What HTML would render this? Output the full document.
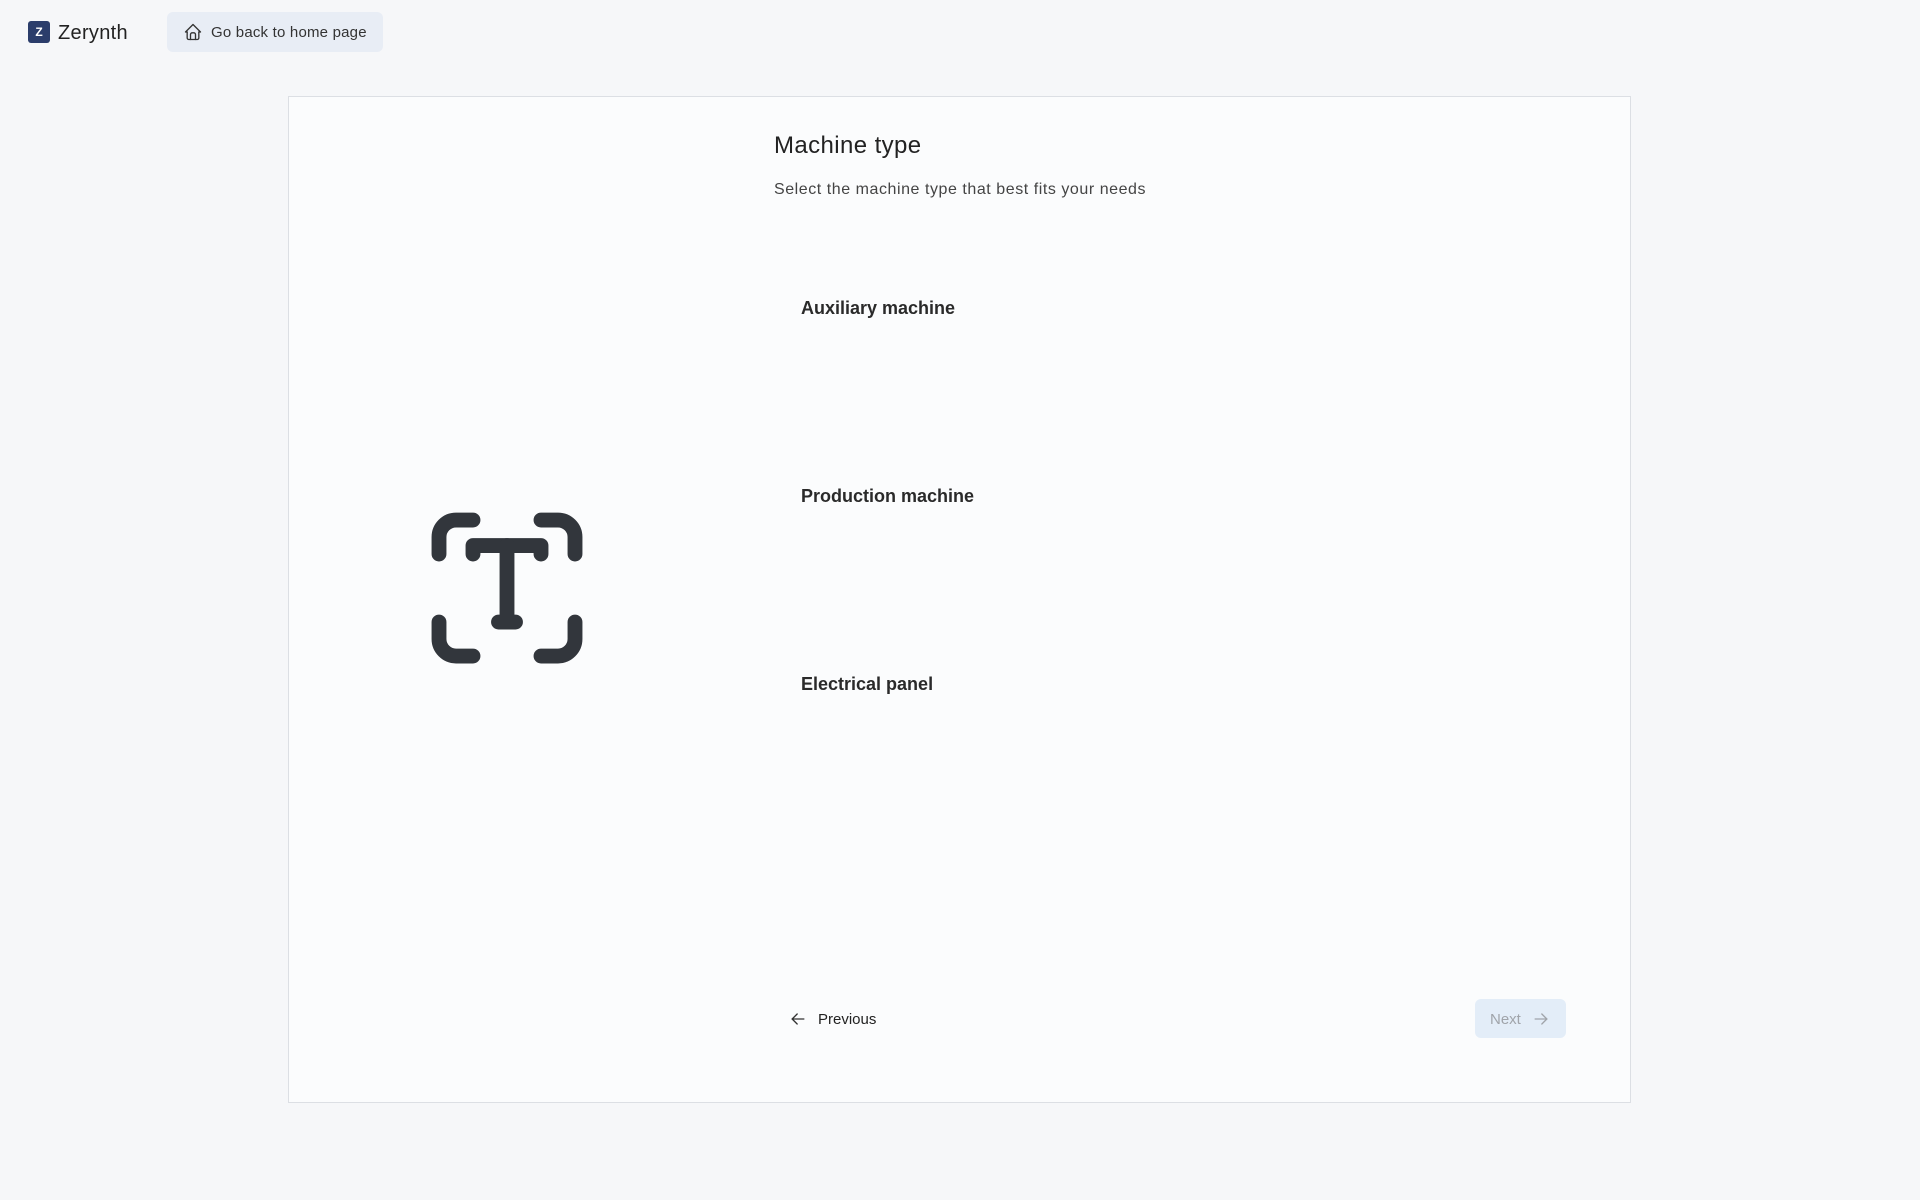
<!DOCTYPE html>
<html><head><meta charset="utf-8"><style>
*{margin:0;padding:0;box-sizing:border-box}
body{width:1920px;height:1200px;background:#f6f7f9;font-family:"Liberation Sans",sans-serif;color:#222;position:relative;overflow:hidden}
.abs{position:absolute}
</style></head><body>
<div class="abs" style="left:28px;top:21px;width:22px;height:22px;background:#2b3d6b;border-radius:3px;color:#fff;font-size:12px;font-weight:bold;line-height:22px;text-align:center">Z</div>
<div class="abs" style="left:58px;top:20px;font-size:20px;line-height:26px;color:#222;letter-spacing:0.3px">Zerynth</div>
<div class="abs" style="left:167px;top:12px;width:216px;height:40px;background:#e8edf5;border-radius:6px"></div>
<svg class="abs" style="left:183px;top:22px" width="20" height="20" viewBox="0 0 24 24" fill="none" stroke="#333" stroke-width="1.6" stroke-linecap="round" stroke-linejoin="round"><path d="M5 12l-2 0l9 -9l9 9l-2 0"/><path d="M5 12v7a2 2 0 0 0 2 2h10a2 2 0 0 0 2 -2v-7"/><path d="M9 21v-6a2 2 0 0 1 2 -2h2a2 2 0 0 1 2 2v6"/></svg>
<div class="abs" style="left:211px;top:24px;font-size:15px;line-height:18px;color:#333;letter-spacing:0.2px">Go back to home page</div>

<div class="abs" style="left:288px;top:96px;width:1343px;height:1007px;background:#fbfcfd;border:1px solid #dcdfe4"></div>
<svg class="abs" style="left:405px;top:486px" width="204" height="204" viewBox="0 0 24 24" fill="none" stroke="#32363c" stroke-width="1.75" stroke-linecap="round" stroke-linejoin="round"><path d="M4 8v-2a2 2 0 0 1 2 -2h2"/><path d="M4 16v2a2 2 0 0 0 2 2h2"/><path d="M16 4h2a2 2 0 0 1 2 2v2"/><path d="M16 20h2a2 2 0 0 0 2 -2v-2"/><path d="M8 8v-1h8v1"/><path d="M12 7v9"/><path d="M11 16h2"/></svg>
<div class="abs" style="left:774px;top:131px;font-size:24px;line-height:30px;color:#222;letter-spacing:0.4px">Machine type</div>
<div class="abs" style="left:774px;top:180px;font-size:16px;line-height:20px;color:#444;letter-spacing:0.55px">Select the machine type that best fits your needs</div>
<div class="abs" style="left:801px;top:297px;font-size:18px;line-height:22px;font-weight:bold;color:#2a2a2a">Auxiliary machine</div>
<div class="abs" style="left:801px;top:485px;font-size:18px;line-height:22px;font-weight:bold;color:#2a2a2a">Production machine</div>
<div class="abs" style="left:801px;top:673px;font-size:18px;line-height:22px;font-weight:bold;color:#2a2a2a">Electrical panel</div>

<svg class="abs" style="left:788px;top:1009px" width="20" height="20" viewBox="0 0 24 24" fill="none" stroke="#333" stroke-width="1.6" stroke-linecap="round" stroke-linejoin="round"><path d="M5 12h14"/><path d="M5 12l6 6"/><path d="M5 12l6 -6"/></svg>
<div class="abs" style="left:818px;top:1011px;font-size:15px;line-height:18px;color:#222">Previous</div>
<div class="abs" style="left:1475px;top:999px;width:91px;height:39px;background:#e3edf8;border-radius:6px"></div>
<div class="abs" style="left:1490px;top:1011px;font-size:15px;line-height:18px;color:#a0a4aa">Next</div>
<svg class="abs" style="left:1531px;top:1009px" width="20" height="20" viewBox="0 0 24 24" fill="none" stroke="#a0a4aa" stroke-width="1.6" stroke-linecap="round" stroke-linejoin="round"><path d="M5 12h14"/><path d="M13 18l6 -6"/><path d="M13 6l6 6"/></svg>
</body></html>
